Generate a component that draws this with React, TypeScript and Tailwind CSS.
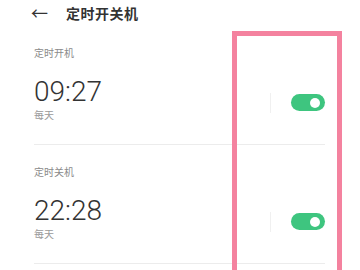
import React from 'react';

const font = { fontFamily: '"Noto Sans", "Noto Sans CJK SC", sans-serif' };

const Toggle = () => (
  <div className="flex items-center">
    <div className="w-px h-[20px] bg-[#f0f0f0] mr-[20px]" />
    <div className="w-[34px] h-[17px] rounded-full bg-[#3ec57f] flex items-center justify-end pr-[5px]">
      <div className="w-[10px] h-[10px] rounded-full bg-white" />
    </div>
  </div>
);

const TimerRow = ({ label, time }: { label: string; time: string }) => (
  <div className="pt-[20px] border-b border-[#ececec] pb-[22px]">
    <div className="text-[10px] leading-[14px] text-[#8a8a8a]">{label}</div>
    <div className="flex items-center justify-between mt-[17px]">
      <div>
        <div className="text-[28px] leading-[30px] text-[#333] font-light" style={{ fontFamily: 'Roboto, sans-serif' }}>{time}</div>
        <div className="text-[10px] leading-[14px] text-[#9a9a9a] mt-[1px]">每天</div>
      </div>
      <div className="mt-[6px]">
        <Toggle />
      </div>
    </div>
  </div>
);

export default function App() {
  return (
    <div className="relative w-[360px] h-[270px] bg-white overflow-hidden" style={font}>
      <div className="flex items-center h-[26px] pl-[31px]">
        <span className="text-[17px] leading-none text-[#333] w-[35px]">←</span>
        <span className="text-[14px] font-bold text-[#333] tracking-[0.5px]">定时开关机</span>
      </div>
      <div className="pl-[34px] pr-[35px]">
        <TimerRow label="定时开机" time="09:27" />
        <TimerRow label="定时关机" time="22:28" />
      </div>
      <div className="absolute left-[232px] top-[31px] w-[110px] h-[260px] border-[5px] border-[#f4829f]" />
    </div>
  );
}
